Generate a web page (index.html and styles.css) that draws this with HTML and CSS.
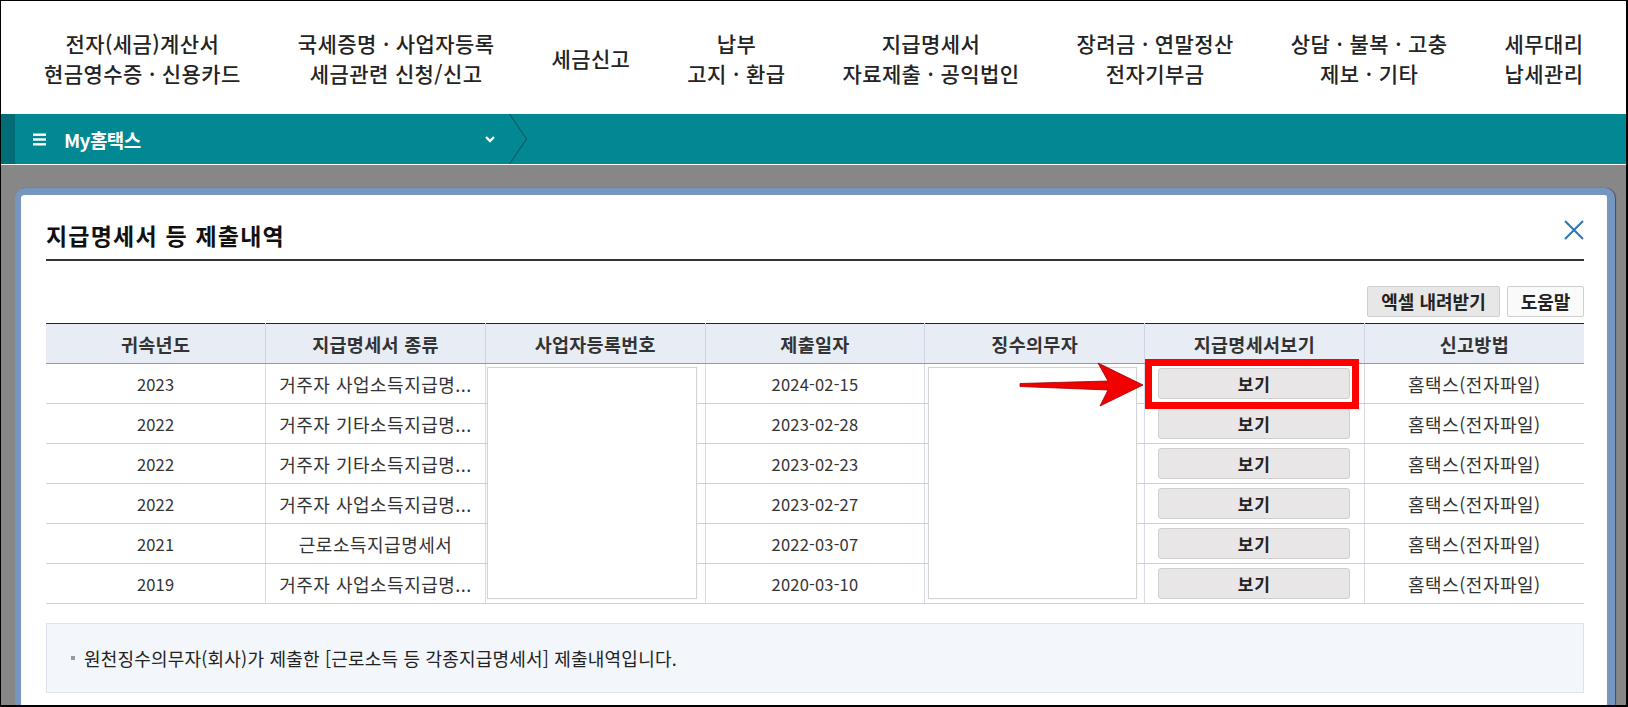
FILE: index.html
```html
<!DOCTYPE html>
<html lang="ko">
<head>
<meta charset="utf-8">
<title>지급명세서 등 제출내역</title>
<link rel="stylesheet" href="styles.css">
</head>
<body>
<div class="page">
  <header class="gnb">
    <div class="gnb-item">전자(세금)계산서<br>현금영수증 · 신용카드</div>
    <div class="gnb-item">국세증명 · 사업자등록<br>세금관련 신청/신고</div>
    <div class="gnb-item">세금신고</div>
    <div class="gnb-item">납부<br>고지 · 환급</div>
    <div class="gnb-item">지급명세서<br>자료제출 · 공익법인</div>
    <div class="gnb-item">장려금 · 연말정산<br>전자기부금</div>
    <div class="gnb-item">상담 · 불복 · 고충<br>제보 · 기타</div>
    <div class="gnb-item">세무대리<br>납세관리</div>
  </header>
  <nav class="lnb">
    <div class="lnb-strip"></div>
    <div class="crumb">
      <svg class="burger" width="13" height="13" viewBox="0 0 13 13"><rect x="0" y="0.5" width="13" height="2.4" fill="#fff"/><rect x="0" y="5.3" width="13" height="2.4" fill="#fff"/><rect x="0" y="10.1" width="13" height="2.4" fill="#fff"/></svg>
      <span class="crumb-label">My홈택스</span>
      <svg class="crumb-caret" width="10" height="7" viewBox="0 0 10 7"><polyline points="1,1 5,5 9,1" fill="none" stroke="#fff" stroke-width="2.4"/></svg>
    </div>
    <svg class="crumb-sep" width="20" height="50" viewBox="0 0 20 50"><polyline points="0.5,0 17.5,25 0.5,50" fill="none" stroke="#0a5b63" stroke-width="1.2"/></svg>
  </nav>
  <main class="stage">
    <section class="modal">
      <div class="modal-head">
        <h2 class="modal-title">지급명세서 등 제출내역</h2>
        <svg class="modal-close" width="20" height="20" viewBox="0 0 20 20"><path d="M1 1 L19 19 M19 1 L1 19" stroke="#2e74b6" stroke-width="2" fill="none"/></svg>
      </div>
      <div class="toolbar">
        <button class="btn btn-excel">엑셀 내려받기</button>
        <button class="btn btn-help">도움말</button>
      </div>
      <div class="grid-wrap">
        <table class="grid">
          <thead>
            <tr><th>귀속년도</th><th>지급명세서 종류</th><th>사업자등록번호</th><th>제출일자</th><th>징수의무자</th><th>지급명세서보기</th><th>신고방법</th></tr>
          </thead>
          <tbody>
            <tr><td>2023</td><td class="kr">거주자 사업소득지급명...</td><td></td><td>2024-02-15</td><td></td><td><button class="btn-view">보기</button></td><td class="kr">홈택스(전자파일)</td></tr>
            <tr><td>2022</td><td class="kr">거주자 기타소득지급명...</td><td></td><td>2023-02-28</td><td></td><td><button class="btn-view">보기</button></td><td class="kr">홈택스(전자파일)</td></tr>
            <tr><td>2022</td><td class="kr">거주자 기타소득지급명...</td><td></td><td>2023-02-23</td><td></td><td><button class="btn-view">보기</button></td><td class="kr">홈택스(전자파일)</td></tr>
            <tr><td>2022</td><td class="kr">거주자 사업소득지급명...</td><td></td><td>2023-02-27</td><td></td><td><button class="btn-view">보기</button></td><td class="kr">홈택스(전자파일)</td></tr>
            <tr><td>2021</td><td class="kr">근로소득지급명세서</td><td></td><td>2022-03-07</td><td></td><td><button class="btn-view">보기</button></td><td class="kr">홈택스(전자파일)</td></tr>
            <tr><td>2019</td><td class="kr">거주자 사업소득지급명...</td><td></td><td>2020-03-10</td><td></td><td><button class="btn-view">보기</button></td><td class="kr">홈택스(전자파일)</td></tr>
          </tbody>
        </table>
        <div class="mask mask-bizno"></div>
        <div class="mask mask-payer"></div>
        <div class="highlight"></div>
        <svg class="arrow" width="140" height="60" viewBox="0 0 140 60"><polygon points="10,28.5 98,26 88,8 133,30 90,51 98,35 10,31.5" fill="#f20000" stroke="#9a0000" stroke-width="0.8" stroke-linejoin="round"/></svg>
      </div>
      <div class="note">
        <span class="note-bullet"></span>
        <span>원천징수의무자(회사)가 제출한 [근로소득 등 각종지급명세서] 제출내역입니다.</span>
      </div>
    </section>
  </main>
</div>
</body>
</html>
```

FILE: styles.css
```css
* { box-sizing: border-box; }
html, body {
  margin: 0;
  padding: 0;
  overflow: hidden;
  background: #fff;
}
body {
  font-family: "Noto Sans CJK KR", "Noto Sans", sans-serif;
  color: #222;
}
.page {
  width: 1628px;
  height: 707px;
  border-style: solid;
  border-color: #000;
  border-width: 1px 2px 2px 1px;
  display: flex;
  flex-direction: column;
  overflow: hidden;
}

/* top menu */
.gnb {
  height: 113px;
  flex: none;
  display: flex;
  align-items: center;
  gap: 57px;
  padding-left: 43px;
  background: #fff;
}
.gnb-item {
  font-size: 21px;
  line-height: 30px;
  font-weight: 500;
  text-align: center;
  color: #232323;
  white-space: nowrap;
  letter-spacing: 0.4px;
}

/* teal bar */
.lnb {
  height: 51px;
  flex: none;
  display: flex;
  background: #018893;
  border-bottom: 1px solid #fff;
}
.lnb-strip {
  width: 14px;
  background: #016e77;
}
.crumb {
  width: 494px;
  display: flex;
  align-items: center;
  padding-left: 18px;
  padding-right: 14px;
}
.burger { display: block; }
.crumb-label {
  margin-left: 18px;
  color: #fff;
  font-weight: 700;
  font-size: 19px;
  letter-spacing: -0.6px;
}
.crumb-caret {
  margin-left: auto;
  display: block;
}
.crumb-sep { display: block; }

/* gray stage */
.stage {
  flex: 1;
  min-height: 0;
  background: #878787;
  padding: 23px 11px 0 14px;
  display: flex;
}
.modal {
  flex: 1;
  background: #fff;
  border-style: solid;
  border-color: #7596c1;
  border-width: 7px 8px 0 6px;
  border-radius: 10px 10px 0 0;
  box-shadow: 1px 0 1px rgba(0, 0, 0, 0.45);
  padding: 0 23px 0 25px;
  overflow: hidden;
}
.modal-head {
  display: flex;
  justify-content: space-between;
  align-items: center;
  border-bottom: 2px solid #333;
  padding: 25px 0 9px;
}
.modal-title {
  margin: 0;
  font-size: 23px;
  line-height: 30px;
  font-weight: 700;
  color: #111;
  letter-spacing: 1.2px;
}
.modal-close {
  display: block;
  margin-bottom: 10px;
}

.toolbar {
  display: flex;
  justify-content: flex-end;
  gap: 7px;
  margin-top: 25px;
}
.btn {
  height: 31px;
  font-family: inherit;
  font-size: 18px;
  font-weight: 700;
  color: #222;
  border: 1px solid #cfcfcf;
  border-radius: 2px;
  padding: 0;
  line-height: 29px;
}
.btn-excel {
  width: 133px;
  background: #e8e7e7;
}
.btn-help {
  width: 77px;
  background: #fafafa;
}

/* grid */
.grid-wrap {
  position: relative;
  margin-top: 6px;
}
.grid {
  width: 100%;
  table-layout: fixed;
  border-collapse: collapse;
  border-top: 1px solid #222;
}
.grid th {
  height: 40px;
  background: #e8edf5;
  font-size: 18.5px;
  font-weight: 700;
  color: #333;
  border-left: 1px solid #cdd5e0;
  border-bottom: 1px solid #9a9a9a;
  padding: 0;
  letter-spacing: 0.3px;
}
.grid td {
  height: 40px;
  font-size: 16.5px;
  color: #333;
  text-align: center;
  border-left: 1px solid #d6dce5;
  border-bottom: 1px solid #c9d2de;
  padding: 0;
  letter-spacing: 0.2px;
  white-space: nowrap;
}
.grid td.kr {
  font-size: 18px;
  letter-spacing: 0.5px;
}
.grid th:first-child, .grid td:first-child { border-left: none; }
.btn-view {
  display: block;
  width: 192px;
  height: 31px;
  margin: 0 auto;
  background: #e8e6e6;
  border: 1px solid #cfcfcf;
  border-radius: 3px;
  font-family: inherit;
  font-size: 17px;
  font-weight: 700;
  color: #222;
  padding: 0;
  letter-spacing: 1px;
}

.mask {
  position: absolute;
  top: 44px;
  height: 232px;
  background: #fff;
  border: 1px solid #d4d4d4;
  box-shadow: 0 0 1px rgba(0, 0, 0, 0.12);
}
.mask-bizno { left: 441px; width: 210px; }
.mask-payer { left: 882px; width: 209px; }

.highlight {
  position: absolute;
  left: 1099px;
  top: 36px;
  width: 214px;
  height: 50px;
  border: 7px solid #ff0000;
}
.arrow {
  position: absolute;
  left: 964px;
  top: 32px;
  display: block;
}

.note {
  margin-top: 19px;
  height: 70px;
  background: #f3f6fa;
  border: 1px solid #dde3eb;
  display: flex;
  align-items: center;
  padding-left: 24px;
  font-size: 18px;
  color: #222;
  letter-spacing: 0.2px;
}
.note-bullet {
  width: 4px;
  height: 4px;
  background: #9a9a9a;
  margin-right: 9px;
  flex: none;
}
```
